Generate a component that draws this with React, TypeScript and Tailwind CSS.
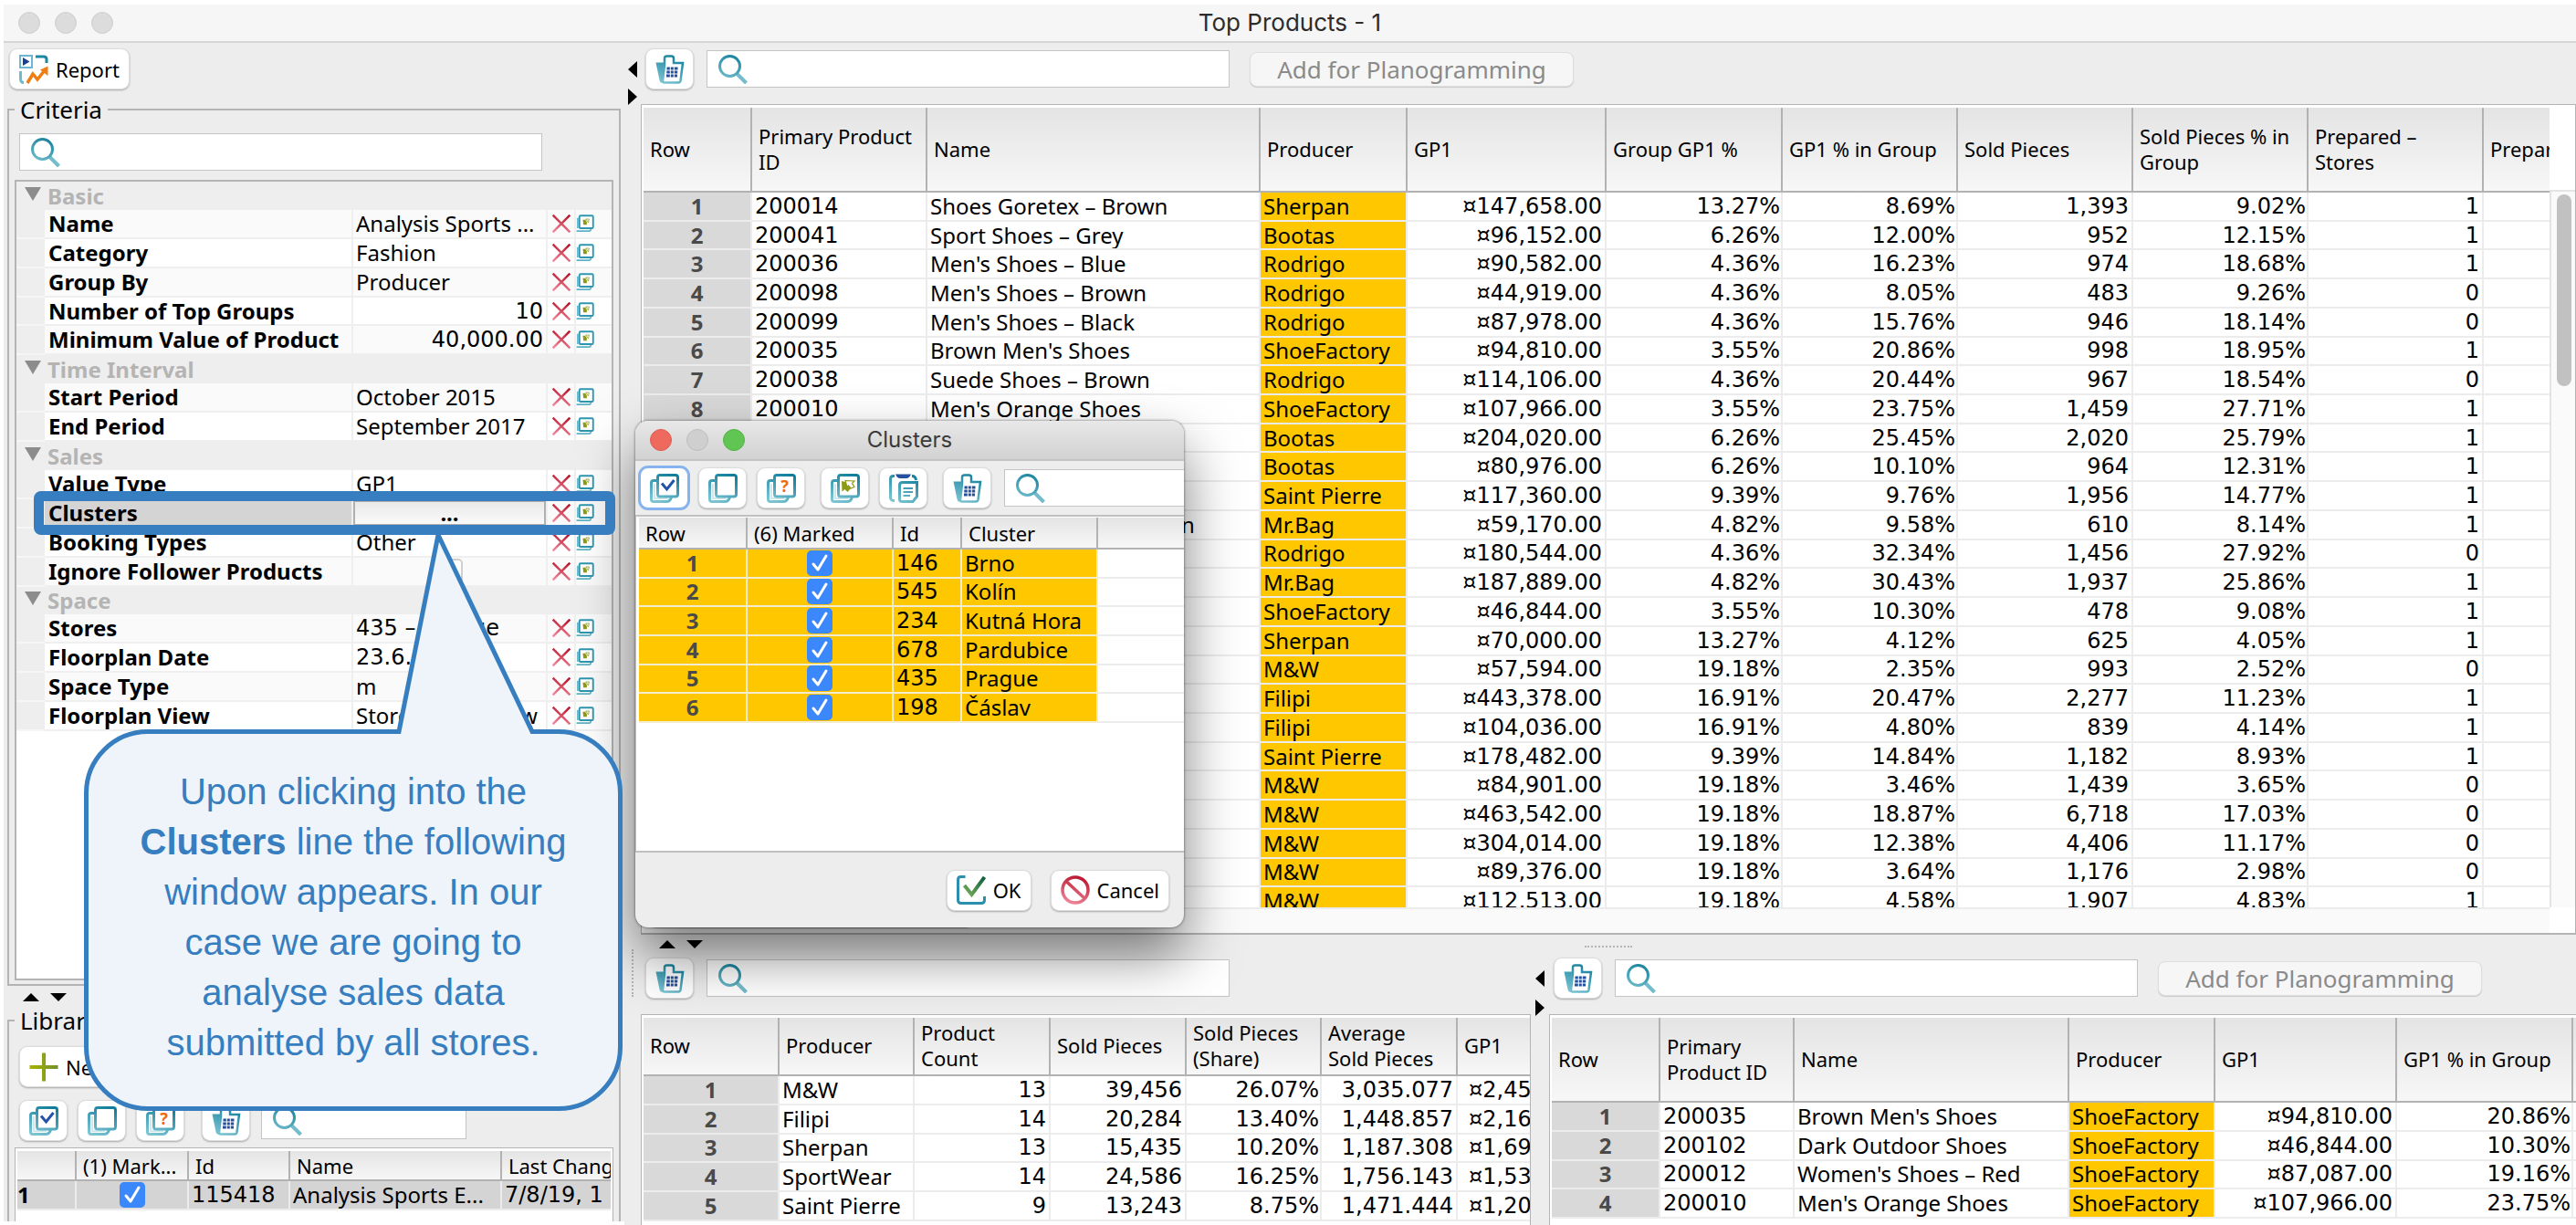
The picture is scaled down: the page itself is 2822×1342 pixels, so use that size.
import type { ReactNode } from 'react';

type Align = 'left' | 'right' | 'center';

type Column = {
  label: string;
  width: string;
  kind?: 'row' | 'text' | 'id' | 'number' | 'percent' | 'mark' | 'clipped';
};

const productColumns: Column[] = [
  { label: 'Row', width: 'w-[119px]', kind: 'row' },
  { label: 'Primary Product\nID', width: 'w-[192px]', kind: 'id' },
  { label: 'Name', width: 'w-[365px]' },
  { label: 'Producer', width: 'w-[161px]', kind: 'mark' },
  { label: 'GP1', width: 'w-[218px]', kind: 'number' },
  { label: 'Group GP1 %', width: 'w-[193px]', kind: 'percent' },
  { label: 'GP1 % in Group', width: 'w-[192px]', kind: 'percent' },
  { label: 'Sold Pieces', width: 'w-[192px]', kind: 'number' },
  { label: 'Sold Pieces % in\nGroup', width: 'w-[192px]', kind: 'percent' },
  { label: 'Prepared –\nStores', width: 'w-[192px]', kind: 'number' },
  { label: 'Prepared', width: '' },
];

const products = [
  ['200014', 'Shoes Goretex – Brown', 'Sherpan', '¤147,658.00', '13.27%', '8.69%', '1,393', '9.02%', '1'],
  ['200041', 'Sport Shoes – Grey', 'Bootas', '¤96,152.00', '6.26%', '12.00%', '952', '12.15%', '1'],
  ['200036', "Men's Shoes – Blue", 'Rodrigo', '¤90,582.00', '4.36%', '16.23%', '974', '18.68%', '1'],
  ['200098', "Men's Shoes – Brown", 'Rodrigo', '¤44,919.00', '4.36%', '8.05%', '483', '9.26%', '0'],
  ['200099', "Men's Shoes – Black", 'Rodrigo', '¤87,978.00', '4.36%', '15.76%', '946', '18.14%', '0'],
  ['200035', "Brown Men's Shoes", 'ShoeFactory', '¤94,810.00', '3.55%', '20.86%', '998', '18.95%', '1'],
  ['200038', 'Suede Shoes – Brown', 'Rodrigo', '¤114,106.00', '4.36%', '20.44%', '967', '18.54%', '0'],
  ['200010', "Men's Orange Shoes", 'ShoeFactory', '¤107,966.00', '3.55%', '23.75%', '1,459', '27.71%', '1'],
  ['', '', 'Bootas', '¤204,020.00', '6.26%', '25.45%', '2,020', '25.79%', '1'],
  ['', '', 'Bootas', '¤80,976.00', '6.26%', '10.10%', '964', '12.31%', '1'],
  ['', '', 'Saint Pierre', '¤117,360.00', '9.39%', '9.76%', '1,956', '14.77%', '1'],
  ['', 'Leather Handbag – Green', 'Mr.Bag', '¤59,170.00', '4.82%', '9.58%', '610', '8.14%', '1'],
  ['', '', 'Rodrigo', '¤180,544.00', '4.36%', '32.34%', '1,456', '27.92%', '0'],
  ['', '', 'Mr.Bag', '¤187,889.00', '4.82%', '30.43%', '1,937', '25.86%', '1'],
  ['', '', 'ShoeFactory', '¤46,844.00', '3.55%', '10.30%', '478', '9.08%', '1'],
  ['', '', 'Sherpan', '¤70,000.00', '13.27%', '4.12%', '625', '4.05%', '1'],
  ['', '', 'M&W', '¤57,594.00', '19.18%', '2.35%', '993', '2.52%', '0'],
  ['', '', 'Filipi', '¤443,378.00', '16.91%', '20.47%', '2,277', '11.23%', '1'],
  ['', '', 'Filipi', '¤104,036.00', '16.91%', '4.80%', '839', '4.14%', '1'],
  ['', '', 'Saint Pierre', '¤178,482.00', '9.39%', '14.84%', '1,182', '8.93%', '1'],
  ['', '', 'M&W', '¤84,901.00', '19.18%', '3.46%', '1,439', '3.65%', '0'],
  ['', '', 'M&W', '¤463,542.00', '19.18%', '18.87%', '6,718', '17.03%', '0'],
  ['', '', 'M&W', '¤304,014.00', '19.18%', '12.38%', '4,406', '11.17%', '0'],
  ['', '', 'M&W', '¤89,376.00', '19.18%', '3.64%', '1,176', '2.98%', '0'],
  ['', '', 'M&W', '¤112,513.00', '19.18%', '4.58%', '1,907', '4.83%', '1'],
];

const producerColumns: Column[] = [
  { label: 'Row', width: 'w-[149px]', kind: 'row' },
  { label: 'Producer', width: 'w-[148px]' },
  { label: 'Product\nCount', width: 'w-[149px]', kind: 'number' },
  { label: 'Sold Pieces', width: 'w-[149px]', kind: 'number' },
  { label: 'Sold Pieces\n(Share)', width: 'w-[148px]', kind: 'percent' },
  { label: 'Average\nSold Pieces', width: 'w-[149px]', kind: 'number' },
  { label: 'GP1', width: '', kind: 'clipped' },
];

const producers = [
  ['M&W', '13', '39,456', '26.07%', '3,035.077', '¤2,45'],
  ['Filipi', '14', '20,284', '13.40%', '1,448.857', '¤2,16'],
  ['Sherpan', '13', '15,435', '10.20%', '1,187.308', '¤1,69'],
  ['SportWear', '14', '24,586', '16.25%', '1,756.143', '¤1,53'],
  ['Saint Pierre', '9', '13,243', '8.75%', '1,471.444', '¤1,20'],
];

const groupColumns: Column[] = [
  { label: 'Row', width: 'w-[119px]', kind: 'row' },
  { label: 'Primary\nProduct ID', width: 'w-[147px]', kind: 'id' },
  { label: 'Name', width: 'w-[301px]' },
  { label: 'Producer', width: 'w-[160px]', kind: 'mark' },
  { label: 'GP1', width: 'w-[199px]', kind: 'number' },
  { label: 'GP1 % in Group', width: 'w-[193px]', kind: 'percent' },
  { label: '', width: '' },
];

const groupProducts = [
  ['200035', "Brown Men's Shoes", 'ShoeFactory', '¤94,810.00', '20.86%'],
  ['200102', 'Dark Outdoor Shoes', 'ShoeFactory', '¤46,844.00', '10.30%'],
  ['200012', "Women's Shoes – Red", 'ShoeFactory', '¤87,087.00', '19.16%'],
  ['200010', "Men's Orange Shoes", 'ShoeFactory', '¤107,966.00', '23.75%'],
];

const clusters = [
  ['146', 'Brno'],
  ['545', 'Kolín'],
  ['234', 'Kutná Hora'],
  ['678', 'Pardubice'],
  ['435', 'Prague'],
  ['198', 'Čáslav'],
];

type Criterion = { label: string; value?: string; kind?: 'section' | 'number' | 'code' | 'picker' | 'check' };

const criteria: Criterion[] = [
  { label: 'Basic', kind: 'section' },
  { label: 'Name', value: 'Analysis Sports ...' },
  { label: 'Category', value: 'Fashion' },
  { label: 'Group By', value: 'Producer' },
  { label: 'Number of Top Groups', value: '10', kind: 'number' },
  { label: 'Minimum Value of Product', value: '40,000.00', kind: 'number' },
  { label: 'Time Interval', kind: 'section' },
  { label: 'Start Period', value: 'October 2015' },
  { label: 'End Period', value: 'September 2017' },
  { label: 'Sales', kind: 'section' },
  { label: 'Value Type', value: 'GP1' },
  { label: 'Clusters', value: '...', kind: 'picker' },
  { label: 'Booking Types', value: 'Other' },
  { label: 'Ignore Follower Products', kind: 'check' },
  { label: 'Space', kind: 'section' },
  { label: 'Stores', value: '435 – Prague', kind: 'code' },
  { label: 'Floorplan Date', value: '23.6.', kind: 'code' },
  { label: 'Space Type', value: 'm' },
  { label: 'Floorplan View', value: 'Storehouses View' },
];

/* ---------- icons ---------- */

const Gradients = () => (
  <svg className="absolute w-0 h-0" aria-hidden="true">
    <defs>
      <linearGradient id="teal" gradientUnits="userSpaceOnUse" x1="24" y1="0" x2="10" y2="32">
        <stop offset="0" stopColor="#0f7d9a" />
        <stop offset="1" stopColor="#7cc4d2" />
      </linearGradient>
      <linearGradient id="red" gradientUnits="userSpaceOnUse" x1="20" y1="0" x2="10" y2="32">
        <stop offset="0" stopColor="#b8142c" />
        <stop offset="1" stopColor="#f08a9c" />
      </linearGradient>
      <linearGradient id="green" gradientUnits="userSpaceOnUse" x1="30" y1="0" x2="10" y2="24">
        <stop offset="0" stopColor="#0c5a3c" />
        <stop offset="1" stopColor="#7ab55c" />
      </linearGradient>
      <linearGradient id="olive" gradientUnits="userSpaceOnUse" x1="0" y1="16" x2="32" y2="17">
        <stop offset="0" stopColor="#a9b400" />
        <stop offset="1" stopColor="#6f8f2e" />
      </linearGradient>
    </defs>
  </svg>
);

const Icon = ({ children, size = 'w-8 h-8' }: { children: ReactNode; size?: string }) => (
  <svg viewBox="0 0 32 32" fill="none" className={`${size} shrink-0`} aria-hidden="true">
    {children}
  </svg>
);

const Pages = ({ children }: { children?: ReactNode }) => (
  <Icon>
    <path d="M7 7.5H4Q1.5 7.5 1.5 10V28Q1.5 30.5 4 30.5H18.5Q21 30.5 22.5 28L23.5 25.5" stroke="url(#teal)" strokeWidth="3" />
    <path d="M5 11V27H19" stroke="#cfe8ee" strokeWidth="2" />
    <rect x="8.5" y="1.5" width="22" height="23.5" rx="2.5" stroke="url(#teal)" strokeWidth="3" fill="#fff" />
    {children}
  </Icon>
);

const CheckAllIcon = () => (
  <Pages>
    <path d="M13 10.5L18.5 17L26.5 7" stroke="#2353a8" strokeWidth="3" />
  </Pages>
);

const HelpIcon = () => (
  <Pages>
    <text x="19.5" y="20" textAnchor="middle" fontSize="18" fontWeight="700" fontFamily="Noto Sans, sans-serif" fill="#ee6a10">
      ?
    </text>
  </Pages>
);

const SelectIcon = () => (
  <Pages>
    <path d="M12 8L18 9.5L17 12L22 16L18.5 20L15.5 17L12.5 19.5Z" fill="#8c9a14" />
    <path d="M16 7.5L26 8L23.5 10.5L26 14.5L22 16L19.5 13L18 14.5Z" stroke="#8c9a14" strokeWidth="1.2" fill="#fff" />
  </Pages>
);

const PasteIcon = () => (
  <Icon>
    <path d="M7 0.5H24Q22 5 19 5H12Q9 5 7 0.5Z" fill="#2450a0" />
    <path d="M6 2.5H4.5Q1.5 2.5 1.5 6V26Q1.5 29.5 6 29.5M25 2.5Q29 2.5 29.5 7" stroke="url(#teal)" strokeWidth="3" />
    <path d="M11.5 28V12.5Q11.5 9.5 14.5 9.5H30.5V25L26 30.5H14Q11.5 30.5 11.5 28Z" stroke="url(#teal)" strokeWidth="3" fill="#fff" />
    <path d="M15.5 16H26M15.5 20H26M15.5 24H23" stroke="url(#teal)" strokeWidth="2" />
  </Icon>
);

const BasketIcon = () => (
  <Icon>
    <path d="M0.5 8.5H9L8.5 31Q5 31 4.5 28Z" fill="url(#teal)" />
    <path d="M8 28.5L10 11V4Q10 1.5 12.5 1.5H17.5Q20 1.5 20 4V9H30L27.5 28.5Q27 30.5 25 30.5H10Q8 30.5 8 28.5Z" stroke="url(#teal)" strokeWidth="2.5" fill="#fff" />
    <path d="M12.5 15H24.5M12.3 19H24.2M12 23H24" stroke="#2450a0" strokeWidth="2.8" />
    <path d="M16.3 13V25M20.3 13V25" stroke="#fff" strokeWidth="1" />
  </Icon>
);

const SearchIcon = () => (
  <Icon>
    <path d="M20.5 21L30.5 31" stroke="#74bccb" strokeWidth="4" />
    <circle cx="12.5" cy="12.5" r="11" stroke="url(#teal)" strokeWidth="3" />
  </Icon>
);

const ReportIcon = () => (
  <Icon>
    <rect x="1" y="1" width="13" height="13" stroke="#6db7d2" strokeWidth="2" fill="#fff" />
    <path d="M4 3L11.5 7.5L4 12Z" fill="#1c3f93" />
    <path d="M18 2H27Q30 2 30 5V9" stroke="#1b87a3" strokeWidth="3" />
    <path d="M1.5 18V26Q1.5 30.5 5 30.5" stroke="#6dbccc" strokeWidth="3" />
    <path d="M9 31L15 21L20 27L28 17" stroke="#ef7d12" strokeWidth="3.5" />
    <path d="M23 16.5L31.5 12.5V23Z" fill="#ef7d12" />
  </Icon>
);

const OkIcon = () => (
  <Icon>
    <path d="M9.5 1.5H4.5Q1.5 1.5 1.5 5V27Q1.5 30.5 5 30.5H27Q30.5 30.5 30.5 27V23" stroke="#2b8fae" strokeWidth="3" />
    <path d="M8.5 11L16.5 21L30.5 2" stroke="url(#green)" strokeWidth="4" />
  </Icon>
);

const CancelIcon = () => (
  <Icon>
    <circle cx="16" cy="16" r="14" stroke="url(#red)" strokeWidth="3.5" />
    <path d="M6 6.5L26.5 25.5" stroke="url(#red)" strokeWidth="3.5" />
  </Icon>
);

const PlusIcon = () => (
  <Icon>
    <path d="M16 0.5V31.5M0.5 16H31.5" stroke="url(#olive)" strokeWidth="4" />
  </Icon>
);

const CrossIcon = () => (
  <Icon size="w-5 h-5">
    <path d="M1 1L31 31M31 1L1 31" stroke="url(#red)" strokeWidth="4" />
  </Icon>
);

const CopyIcon = () => (
  <Icon size="w-5 h-5">
    <path d="M3 6V24M1 29H23Q26 29 26 25" stroke="#5fb2c4" strokeWidth="2.5" />
    <rect x="6" y="2" width="24" height="22" rx="2" stroke="#2e96b0" strokeWidth="3" fill="#fff" />
    <path d="M12 9H16L19 13V18H13Z" fill="#8c9a14" />
    <path d="M17 8H23L21.5 14Z" stroke="#8c9a14" strokeWidth="1.2" />
  </Icon>
);

const Arrow = ({ to }: { to: 'left' | 'right' | 'up' | 'down' }) => {
  const points = {
    left: '10,0 10,18 0,9',
    right: '0,0 0,18 10,9',
    up: '0,9 18,9 9,0',
    down: '0,0 18,0 9,9',
  }[to];
  const flat = to === 'up' || to === 'down';
  return (
    <svg viewBox={flat ? '0 0 18 9' : '0 0 10 18'} className={flat ? 'w-[18px] h-[9px]' : 'w-[10px] h-[18px]'} aria-hidden="true">
      <polygon points={points} fill="#000" />
    </svg>
  );
};

/* ---------- controls ---------- */

const IconButton = ({ label, focused, children }: { label: string; focused?: boolean; children: ReactNode }) => (
  <button
    type="button"
    aria-label={label}
    className={`flex h-[45px] w-[53px] shrink-0 items-center justify-center rounded-[9px] border bg-white shadow-[0_1px_2px_rgba(0,0,0,0.3)] ${
      focused ? 'border-[#86b3ee] ring-2 ring-[#86b3ee]' : 'border-[#dcdcdc]'
    }`}
  >
    {children}
  </button>
);

const TextButton = ({ icon, children }: { icon: ReactNode; children: ReactNode }) => (
  <button
    type="button"
    className="flex h-[45px] shrink-0 items-center gap-2 rounded-[9px] border border-[#dcdcdc] bg-white px-[10px] text-[22px] leading-7 shadow-[0_1px_2px_rgba(0,0,0,0.3)]"
  >
    {icon}
    {children}
  </button>
);

const SearchBox = ({ label, width }: { label: string; width: string }) => (
  <label className={`flex h-[41px] shrink-0 items-center border border-[#c4c4c4] bg-white pl-3 ${width}`}>
    <SearchIcon />
    <input type="text" aria-label={label} className="min-w-0 flex-1 bg-transparent px-2 text-2xl outline-none" />
  </label>
);

const CheckBox = ({ label }: { label: string }) => (
  <span className="inline-grid align-top">
    <input
      type="checkbox"
      defaultChecked
      aria-label={label}
      className="col-start-1 row-start-1 h-7 w-7 appearance-none rounded-[5px] bg-[#3b87fc]"
    />
    <svg viewBox="0 0 28 28" fill="none" className="pointer-events-none col-start-1 row-start-1 h-7 w-7" aria-hidden="true">
      <path d="M7 15L12 21L21 6" stroke="#fff" strokeWidth="3" strokeLinecap="round" strokeLinejoin="round" />
    </svg>
  </span>
);

const PaneToolbar = ({ planogram }: { planogram?: boolean }) => (
  <div className="flex items-center pl-[5px]">
    <IconButton label="Export to basket">
      <BasketIcon />
    </IconButton>
    <div className="ml-[14px] flex">
      <SearchBox label="Search products" width="w-[573px]" />
    </div>
    {planogram && (
      <button
        type="button"
        disabled
        className="ml-[22px] h-[38px] w-[355px] rounded-lg border border-[#dedede] bg-[#f6f6f6] text-[26px] leading-8 text-[#8a8a8a] shadow-[0_1px_1px_rgba(0,0,0,0.15)]"
      >
        Add for Planogramming
      </button>
    )}
  </div>
);

const headCell =
  'overflow-hidden border-r-2 border-b-2 border-[#b2b2b2] bg-linear-to-b from-[#e4e4e4] to-[#f7f7f7] pl-[7px] text-left text-[22px] leading-7 font-normal';

const cellStyle = {
  row: 'bg-[#d9d9d9] text-center font-bold text-[#4a4a4a]',
  text: 'pl-[3px]',
  id: 'pl-[3px] font-[DejaVu_Sans,sans-serif]',
  number: 'pr-[3px] font-[DejaVu_Sans,sans-serif]',
  percent: 'pr-px font-[DejaVu_Sans,sans-serif]',
  mark: 'bg-[#ffc700] pl-[3px]',
  clipped: 'pl-[12px] font-[DejaVu_Sans,sans-serif]',
};

const alignStyle: Record<Align, string> = { left: 'text-left', right: 'text-right', center: 'text-center' };

const alignOf = (column: Column): Align => {
  if (column.kind === 'row') return 'center';
  return column.kind === 'number' || column.kind === 'percent' ? 'right' : 'left';
};

const DataTable = ({ columns, rows, height, headHeight }: { columns: Column[]; rows: string[][]; height: string; headHeight: string }) => (
  <table className={`w-full table-fixed border-separate border-spacing-0 bg-white ${height}`}>
    <colgroup>
      {columns.map((column, index) => (
        <col key={index} className={column.width} />
      ))}
    </colgroup>
    <thead>
      <tr className={headHeight}>
        {columns.map((column, index) => (
          <th key={index} scope="col" className={`${headCell} pb-[2px] whitespace-pre last:border-r-0`}>
            {column.label}
          </th>
        ))}
      </tr>
    </thead>
    <tbody>
      {rows.map((row, rowIndex) => (
        <tr key={rowIndex}>
          {columns.map((column, index) => (
            <td
              key={index}
              className={`overflow-hidden border-r-2 border-b-2 border-[#ececec] text-2xl leading-[28px] whitespace-nowrap last:border-r-0 ${alignStyle[alignOf(column)]} ${cellStyle[column.kind ?? 'text']}`}
            >
              {index === 0 ? rowIndex + 1 : row[index - 1]}
            </td>
          ))}
        </tr>
      ))}
    </tbody>
  </table>
);

/* ---------- left side ---------- */

const valueStyle = {
  text: 'pl-[3px]',
  code: 'pl-[3px] font-[DejaVu_Sans,sans-serif]',
  number: 'pr-[3px] text-right font-[DejaVu_Sans,sans-serif]',
  picker: '',
  check: '',
  section: '',
};

const CriterionValue = ({ item }: { item: Criterion }) => {
  if (item.kind === 'picker') {
    return (
      <button type="button" aria-label="Choose clusters" className="block h-7 w-full border-2 border-[#b0b0b0] bg-linear-to-b from-[#e9e9e9] to-[#fafafa] text-2xl leading-5 font-bold">
        {item.value}
      </button>
    );
  }
  if (item.kind === 'check') {
    return <input type="checkbox" aria-label={item.label} className="mx-auto block h-7 w-7 appearance-none rounded-[5px] border-2 border-[#cfcfcf] bg-white" />;
  }
  return <>{item.value}</>;
};

const CriteriaTable = () => (
  <table className="h-[602px] w-full table-fixed border-separate border-spacing-0">
    <colgroup>
      <col className="w-[31px]" />
      <col className="w-[338px]" />
      <col className="w-[213px]" />
      <col className="w-[31px]" />
      <col className="w-[20px]" />
      <col />
    </colgroup>
    <tbody>
      {criteria.map((item, index) =>
        item.kind === 'section' ? (
          <tr key={item.label} className="bg-[#eeeeee]">
            <td className="pl-[9px]">
              <svg viewBox="0 0 18 15" className="mb-1 h-[15px] w-[18px]" aria-hidden="true">
                <polygon points="0,0 18,0 9,15" fill="#8c8c8c" />
              </svg>
            </td>
            <th scope="rowgroup" colSpan={5} className="pt-px pl-[3px] text-left text-2xl leading-[28px] font-bold text-[#b4b4b4]">
              {item.label}
            </th>
          </tr>
        ) : (
          <tr key={item.label} className={index % 2 ? 'bg-[#fafafa]' : 'bg-white'}>
            <td className="border-b-2 border-[#f6f6f6] bg-[#eeeeee]" />
            <th
              scope="row"
              className={`border-r-2 border-b-2 border-[#efefef] pl-1 text-left text-2xl leading-[28px] font-bold whitespace-nowrap ${
                item.kind === 'picker' ? 'bg-[#d4d4d4]' : ''
              }`}
            >
              {item.label}
            </th>
            <td className={`overflow-hidden border-r-2 border-b-2 border-[#efefef] text-2xl leading-[28px] whitespace-nowrap ${valueStyle[item.kind ?? 'text']}`}>
              <CriterionValue item={item} />
            </td>
            <td className="border-r-2 border-b-2 border-[#efefef]">
              <button type="button" aria-label={`Clear ${item.label}`} className="mx-auto block w-5">
                <CrossIcon />
              </button>
            </td>
            <td className="border-b-2 border-[#efefef]">
              <button type="button" aria-label={`Copy ${item.label}`} className="block w-5">
                <CopyIcon />
              </button>
            </td>
            <td className="border-b-2 border-[#efefef]" />
          </tr>
        ),
      )}
    </tbody>
  </table>
);

const LibraryTable = () => (
  <table className="w-full table-fixed border-separate border-spacing-0">
    <colgroup>
      <col className="w-[65px]" />
      <col className="w-[123px]" />
      <col className="w-[111px]" />
      <col className="w-[232px]" />
      <col />
    </colgroup>
    <thead>
      <tr className="h-[33px]">
        {['', '(1) Mark...', 'Id', 'Name', 'Last Change'].map((label) => (
          <th key={label} scope="col" className={`${headCell} whitespace-nowrap last:border-r-0`}>
            {label}
          </th>
        ))}
      </tr>
    </thead>
    <tbody>
      <tr className="h-8 bg-[#d4d4d4] text-2xl leading-[28px]">
        <td className="border-r-2 border-b-2 border-[#ececec] font-bold">1</td>
        <td className="border-r-2 border-b-2 border-[#ececec] text-center">
          <CheckBox label="Mark 115418" />
        </td>
        <td className="border-r-2 border-b-2 border-[#ececec] pl-[3px] font-[DejaVu_Sans,sans-serif]">115418</td>
        <td className="overflow-hidden border-r-2 border-b-2 border-[#ececec] pl-[3px] whitespace-nowrap">Analysis Sports E...</td>
        <td className="overflow-hidden border-b-2 border-[#ececec] pl-[3px] font-[DejaVu_Sans,sans-serif] whitespace-nowrap">7/8/19, 1</td>
      </tr>
    </tbody>
  </table>
);

const Sidebar = () => (
  <aside className="flex w-[680px] shrink-0 flex-col border-b-4 border-white px-1 pt-[6px]">
    <div className="flex pb-2 pl-[2px]">
      <TextButton icon={<ReportIcon />}>Report</TextButton>
    </div>
    <fieldset className="flex min-h-0 min-w-0 flex-1 flex-col border-2 border-[#b4b4b4] px-[6px] pb-1">
      <legend className="px-[6px] text-[26px] leading-7">Criteria</legend>
      <div className="mt-3 ml-[5px] flex">
        <SearchBox label="Search criteria" width="w-[573px]" />
      </div>
      <div className="mt-[10px] min-h-0 flex-1 overflow-hidden border-2 border-[#b4b4b4] bg-white">
        <CriteriaTable />
      </div>
    </fieldset>
    <div className="flex h-6 shrink-0 items-center gap-3 pl-[17px]">
      <Arrow to="up" />
      <Arrow to="down" />
    </div>
    <fieldset className="h-[234px] min-w-0 shrink-0 overflow-hidden border-2 border-b-0 border-[#b4b4b4] px-[6px]">
      <legend className="px-[6px] text-[26px] leading-7">Library</legend>
      <div className="mt-[14px] ml-[5px] flex">
        <TextButton icon={<PlusIcon />}>New</TextButton>
      </div>
      <div className="mt-[14px] ml-[5px] flex items-center gap-[11px]">
        <IconButton label="Mark all">
          <CheckAllIcon />
        </IconButton>
        <IconButton label="Unmark all">
          <Pages />
        </IconButton>
        <IconButton label="Invert marks">
          <HelpIcon />
        </IconButton>
        <div className="ml-2 flex items-center gap-3">
          <IconButton label="Export to basket">
            <BasketIcon />
          </IconButton>
          <SearchBox label="Search library" width="w-[225px]" />
        </div>
      </div>
      <div className="mt-[7px] h-24 border border-[#b4b4b4] bg-white px-[2px] pt-[3px]">
        <LibraryTable />
      </div>
    </fieldset>
  </aside>
);

/* ---------- cluster dialog ---------- */

const ClustersDialog = () => (
  <section
    role="dialog"
    aria-label="Clusters"
    className="absolute top-[461px] left-[696px] flex h-[555px] w-[601px] flex-col overflow-hidden rounded-[14px] bg-[#ededed] shadow-[0_30px_60px_rgba(0,0,0,0.5),0_0_3px_rgba(0,0,0,0.6)]"
  >
    <header className="grid h-[44px] shrink-0 grid-cols-[1fr_auto_1fr] items-center border-b-2 border-[#c4c4c4] bg-linear-to-b from-[#e8e8e8] to-[#d2d2d2] px-4">
      <div className="flex gap-4">
        <span className="h-6 w-6 rounded-full border border-[#dd5c50] bg-[#ee6a5f]" />
        <span className="h-6 w-6 rounded-full border border-[#bdbdbd] bg-[#cfcfcf]" />
        <span className="h-6 w-6 rounded-full border border-[#52b244] bg-[#61c554]" />
      </div>
      <h2 className="font-[Inter,sans-serif] text-2xl leading-7 text-[#3a3a3a]">Clusters</h2>
    </header>
    <div className="flex shrink-0 items-center gap-[11px] py-[7px] pl-[5px]">
      <IconButton label="Mark all" focused>
        <CheckAllIcon />
      </IconButton>
      <IconButton label="Unmark all">
        <Pages />
      </IconButton>
      <IconButton label="Invert marks">
        <HelpIcon />
      </IconButton>
      <div className="ml-[6px] flex gap-[11px]">
        <IconButton label="Copy selection">
          <SelectIcon />
        </IconButton>
        <IconButton label="Paste selection">
          <PasteIcon />
        </IconButton>
      </div>
      <div className="ml-[6px] flex items-center gap-[14px]">
        <IconButton label="Export to basket">
          <BasketIcon />
        </IconButton>
        <SearchBox label="Search clusters" width="w-[220px]" />
      </div>
    </div>
    <div className="min-h-0 flex-1 border-y-2 border-l border-[#c0c0c0] bg-white pt-px pl-[3px]">
      <table className="h-[225px] w-full table-fixed border-separate border-spacing-0">
        <colgroup>
          <col className="w-[119px]" />
          <col className="w-[160px]" />
          <col className="w-[75px]" />
          <col className="w-[149px]" />
          <col />
        </colgroup>
        <thead>
          <tr className="h-[35px]">
            {['Row', '(6) Marked', 'Id', 'Cluster', ''].map((label) => (
              <th key={label} scope="col" className={`${headCell} whitespace-nowrap last:border-r-0`}>
                {label}
              </th>
            ))}
          </tr>
        </thead>
        <tbody>
          {clusters.map(([id, name], index) => (
            <tr key={id} className="text-2xl leading-[28px]">
              <td className="border-r-2 border-b-2 border-[#f3ecd0] bg-[#ffc700] text-center font-bold text-[#4a4a4a]">{index + 1}</td>
              <td className="border-r-2 border-b-2 border-[#f3ecd0] bg-[#ffc700] text-center">
                <CheckBox label={`Mark ${name}`} />
              </td>
              <td className="border-r-2 border-b-2 border-[#f3ecd0] bg-[#ffc700] pl-[3px] font-[DejaVu_Sans,sans-serif]">{id}</td>
              <td className="border-r-2 border-b-2 border-[#f3ecd0] bg-[#ffc700] pl-[3px] whitespace-nowrap">{name}</td>
              <td className="border-b-2 border-[#ececec]" />
            </tr>
          ))}
        </tbody>
      </table>
    </div>
    <footer className="flex h-[82px] shrink-0 items-center justify-end gap-[21px] pr-4">
      <TextButton icon={<OkIcon />}>OK</TextButton>
      <TextButton icon={<CancelIcon />}>Cancel</TextButton>
    </footer>
  </section>
);

/* ---------- annotation ---------- */

const Callout = () => (
  <>
    <div className="absolute top-[799px] left-[92px] h-[418px] w-[590px] rounded-[70px] border-[5px] border-[#367ebf] bg-[#eef4f9] px-[50px] pt-9 text-center font-[Liberation_Sans,Arial,sans-serif] text-[40px] leading-[55px] text-[#367ebf]">
      Upon clicking into the <b>Clusters</b> line the following window appears. In our case we are going to analyse sales data submitted by all
      stores.
    </div>
    <svg viewBox="0 0 160 230" fill="none" className="absolute top-[580px] left-[430px] h-[230px] w-[160px]" aria-hidden="true">
      <path d="M7 221L9 225H151L153 221L50 6Z" fill="#eef4f9" />
      <path d="M4 221.5H7L50 6L153 221.5H157" stroke="#367ebf" strokeWidth="5" />
    </svg>
    <div className="absolute top-[538px] left-[37px] h-12 w-[637px] rounded-lg border-[11px] border-[#367ebf]" />
  </>
);

const Dots = ({ vertical }: { vertical?: boolean }) => (
  <span className={vertical ? 'h-[52px] border-l-2 border-dotted border-[#b5b5b5]' : 'w-[52px] border-t-2 border-dotted border-[#b5b5b5]'} />
);

export default function App() {
  return (
    <div className="relative flex h-screen flex-col overflow-hidden bg-white pt-[5px] pl-1 font-[Noto_Sans,sans-serif] text-black">
      <Gradients />
      <header className="grid h-[42px] shrink-0 grid-cols-[1fr_auto_1fr] items-center border-b-2 border-[#d6d6d6] bg-[#f6f6f6] px-4">
        <div className="flex gap-4">
          <span className="h-6 w-6 rounded-full border border-[#cfcfcf] bg-[#dcdcdc]" />
          <span className="h-6 w-6 rounded-full border border-[#cfcfcf] bg-[#dcdcdc]" />
          <span className="h-6 w-6 rounded-full border border-[#cfcfcf] bg-[#dcdcdc]" />
        </div>
        <h1 className="font-[Inter,sans-serif] text-[26px] leading-8 text-[#2c2c2c]">Top Products - 1</h1>
      </header>

      <div className="flex min-h-0 flex-1 bg-[#ededed]">
        <Sidebar />

        <div className="flex w-[18px] shrink-0 flex-col items-center pt-5">
          <Arrow to="left" />
          <div className="mt-3">
            <Arrow to="right" />
          </div>
          <div className="mt-auto mb-[250px] flex">
            <Dots vertical />
          </div>
        </div>

        <main className="flex min-w-0 flex-1 flex-col">
          <section className="flex min-h-0 flex-1 flex-col pt-[6px]">
            <PaneToolbar planogram />
            <div className="mt-4 flex min-h-0 flex-1 flex-col border-t border-r border-b-2 border-l border-[#b4b4b4] bg-white pt-[3px] pl-[2px]">
              <div className="flex min-h-0 flex-1">
                <div className="min-w-0 flex-1 overflow-hidden">
                  <DataTable columns={productColumns} rows={products} height="h-[886px]" headHeight="h-[93px]" />
                </div>
                <div className="flex w-7 shrink-0 flex-col pt-[90px]">
                  <div className="flex-1 border-t-2 border-l-2 border-[#e4e4e4] bg-[#fafafa] pt-[3px] pl-[6px]">
                    <div className="h-[210px] w-4 rounded-full bg-[#c1c1c1]" />
                  </div>
                </div>
              </div>
              <div className="mr-7 h-7 shrink-0 border-t-2 border-[#ececec] bg-[#fafafa] pt-[5px] pl-[6px]">
                <div className="h-4 w-[355px] rounded-full bg-[#b8b8b8]" />
              </div>
            </div>
          </section>

          <div className="grid h-[25px] shrink-0 grid-cols-[1fr_auto_1fr] items-center px-5">
            <div className="flex gap-3 pb-1">
              <Arrow to="up" />
              <Arrow to="down" />
            </div>
            <Dots />
          </div>

          <div className="flex h-[293px] shrink-0">
            <section className="flex w-[975px] shrink-0 flex-col">
              <PaneToolbar />
              <div className="mt-[17px] min-h-0 flex-1 overflow-hidden border-t border-r border-l border-[#b4b4b4] bg-white pt-[3px] pl-[2px]">
                <DataTable columns={producerColumns} rows={producers} height="h-[223px]" headHeight="h-[64px]" />
              </div>
            </section>

            <div className="flex w-5 shrink-0 flex-col items-center pt-[14px]">
              <Arrow to="left" />
              <div className="mt-[14px]">
                <Arrow to="right" />
              </div>
            </div>

            <section className="flex min-w-0 flex-1 flex-col">
              <PaneToolbar planogram />
              <div className="mt-[17px] min-h-0 flex-1 overflow-hidden border-t border-l border-[#b4b4b4] bg-white pt-[3px] pl-[2px]">
                <DataTable columns={groupColumns} rows={groupProducts} height="h-[220px]" headHeight="h-[93px]" />
              </div>
            </section>
          </div>
        </main>
      </div>

      <ClustersDialog />
      <Callout />
    </div>
  );
}
